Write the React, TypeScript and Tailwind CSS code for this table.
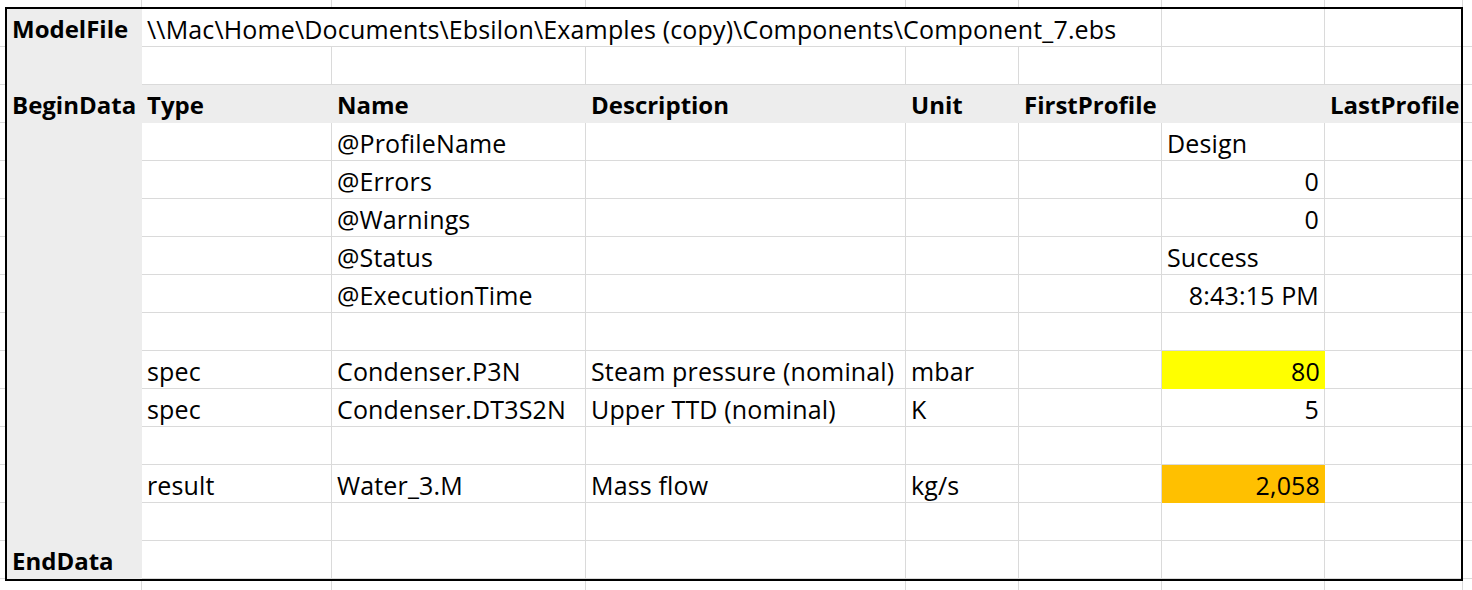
type Cell = { t?: string; b?: boolean; r?: boolean; fill?: "yellow" | "orange" | "gray" };

const COLS = ["w-[135px]", "w-[190px]", "w-[254px]", "w-[320px]", "w-[113px]", "w-[143px]", "w-[163px]", "w-[136px]"];
const EDGE = [142, 190, 254, 320, 113, 143, 163, 138];

const rows: Cell[][] = [
  [],
  [],
  [
    { t: "BeginData", b: true },
    { t: "Type", b: true, fill: "gray" },
    { t: "Name", b: true, fill: "gray" },
    { t: "Description", b: true, fill: "gray" },
    { t: "Unit", b: true, fill: "gray" },
    { t: "FirstProfile", b: true, fill: "gray" },
    { fill: "gray" },
    { t: "LastProfile", b: true, fill: "gray" },
  ],
  [{}, {}, { t: "@ProfileName" }, {}, {}, {}, { t: "Design" }, {}],
  [{}, {}, { t: "@Errors" }, {}, {}, {}, { t: "0", r: true }, {}],
  [{}, {}, { t: "@Warnings" }, {}, {}, {}, { t: "0", r: true }, {}],
  [{}, {}, { t: "@Status" }, {}, {}, {}, { t: "Success" }, {}],
  [{}, {}, { t: "@ExecutionTime" }, {}, {}, {}, { t: "8:43:15 PM", r: true }, {}],
  [],
  [{}, { t: "spec" }, { t: "Condenser.P3N" }, { t: "Steam pressure (nominal)" }, { t: "mbar" }, {}, { t: "80", r: true, fill: "yellow" }, {}],
  [{}, { t: "spec" }, { t: "Condenser.DT3S2N" }, { t: "Upper TTD (nominal)" }, { t: "K" }, {}, { t: "5", r: true }, {}],
  [],
  [{}, { t: "result" }, { t: "Water_3.M" }, { t: "Mass flow" }, { t: "kg/s" }, {}, { t: "2,058", r: true, fill: "orange" }, {}],
  [],
  [{ t: "EndData", b: true }],
];

function cellClass(c: Cell, col: number) {
  const cls = ["h-[38px]", "shrink-0", "px-[5px]", "leading-[40px]", "whitespace-nowrap", "overflow-visible"];
  if (c.r) cls.push("text-right");
  if (c.b) cls.push("font-bold", "text-[24px]");
  else cls.push("text-[25px]", "tracking-[0.15px]");
  if (col === 0 || c.fill === "gray") cls.push("bg-[#ededed]");
  else if (c.fill === "yellow") cls.push("bg-[#ffff00]");
  else if (c.fill === "orange") cls.push("bg-[#ffc000]");
  else {
    cls.push("border-b", "border-[#dadada]");
    if (col !== 7) cls.push("border-r");
  }
  return cls.join(" ");
}

function GridStrip() {
  return (
    <div className="flex h-full">
      {EDGE.map((w, i) => (
        <div key={i} style={{ width: w }} className="h-full shrink-0 border-r border-[#dadada]" />
      ))}
    </div>
  );
}

function SideStrip() {
  return (
    <div className="flex flex-col">
      <div className="h-[40px] border-b border-[#dadada]" />
      {Array.from({ length: 14 }).map((_, i) => (
        <div key={i} className="h-[38px] border-b border-[#dadada]" />
      ))}
    </div>
  );
}

export default function App() {
  return (
    <div className="w-[1472px] h-[590px] overflow-hidden bg-white text-black font-['Open_Sans',sans-serif] flex flex-col">
      <div className="h-[7px] shrink-0">
        <GridStrip />
      </div>
      <div className="flex shrink-0">
        <div className="w-[5px] shrink-0">
          <SideStrip />
        </div>
        <div className="border-2 border-black shrink-0">
          {/* row 1: path overflows across B..F */}
          <div className="flex">
            <div className={`${COLS[0]} ${cellClass({ b: true }, 0)}`}>ModelFile</div>
            <div className={`w-[1020px] ${cellClass({}, 1)}`}>
              {"\\\\Mac\\Home\\Documents\\Ebsilon\\Examples (copy)\\Components\\Component_7.ebs"}
            </div>
            <div className={`${COLS[6]} ${cellClass({}, 6)}`} />
            <div className={`${COLS[7]} ${cellClass({}, 7)}`} />
          </div>
          {rows.slice(1).map((row, ri) => (
            <div key={ri} className="flex">
              {COLS.map((w, ci) => {
                const c = row[ci] ?? {};
                return (
                  <div key={ci} className={`${w} ${cellClass(c, ci)}`}>
                    {c.t}
                  </div>
                );
              })}
            </div>
          ))}
        </div>
        <div className="flex-1">
          <SideStrip />
        </div>
      </div>
      <div className="flex-1">
        <GridStrip />
      </div>
    </div>
  );
}
